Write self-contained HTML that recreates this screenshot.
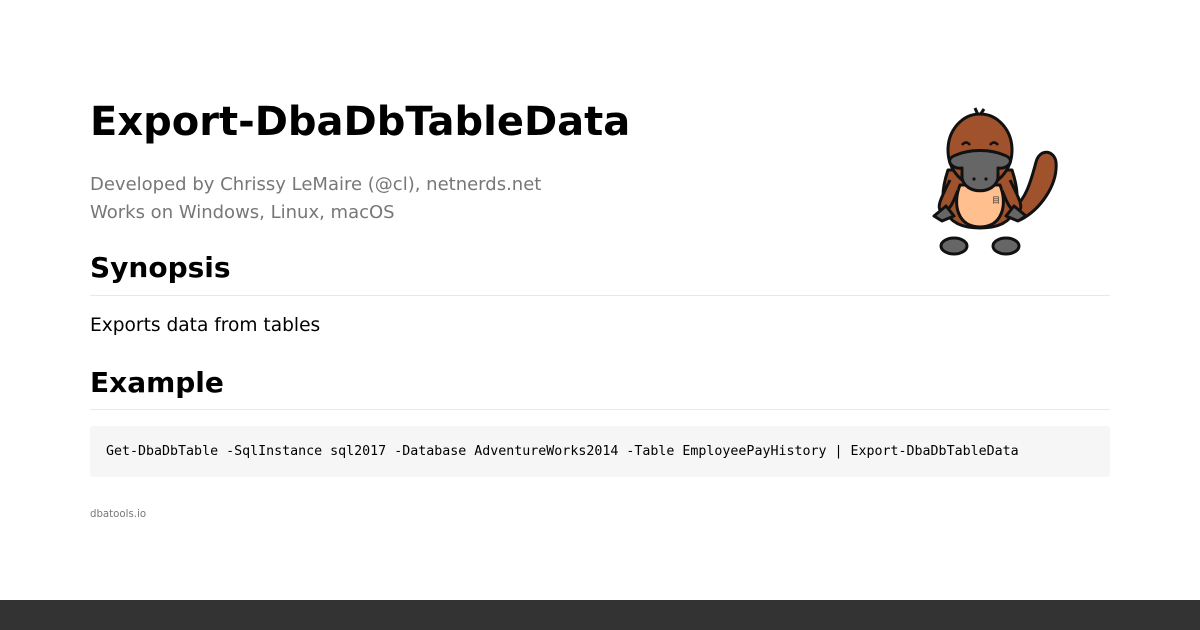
<!DOCTYPE html>
<html><head><meta charset="utf-8"><style>
body{margin:0;width:1200px;height:630px;background:#fff;position:relative;font-family:"DejaVu Sans",sans-serif;overflow:hidden}
.wrap{position:absolute;left:90px;top:0;width:1020px}
h1{position:absolute;top:99px;margin:0;font-size:40px;font-weight:bold;color:#000;white-space:nowrap}
.sub{position:absolute;top:171px;font-size:18px;line-height:28px;color:#777}
h2{position:absolute;margin:0;font-size:28px;font-weight:bold;white-space:nowrap}
.hr{position:absolute;left:0;width:1020px;height:1px;background:#e8e8e8}
.p{position:absolute;top:315px;font-size:18.6px}
.code{position:absolute;top:426px;left:0;width:1020px;height:51px;background:#f6f6f6;border-radius:3px;font-family:"DejaVu Sans Mono",monospace;font-size:13.3px;line-height:51px;box-sizing:border-box;padding-left:16px;white-space:nowrap}
.foot{position:absolute;top:509px;font-size:10.2px;color:#777}
.bar{position:absolute;left:0;top:600px;width:1200px;height:30px;background:#333}
</style></head><body>
<div class="wrap">
<h1>Export-DbaDbTableData</h1>
<div class="sub">Developed by Chrissy LeMaire (@cl), netnerds.net<br>Works on Windows, Linux, macOS</div>
<h2 style="top:251px">Synopsis</h2>
<div class="hr" style="top:295px"></div>
<div class="p">Exports data from tables</div>
<h2 style="top:366px">Example</h2>
<div class="hr" style="top:409px"></div>
<div class="code">Get-DbaDbTable -SqlInstance sql2017 -Database AdventureWorks2014 -Table EmployeePayHistory | Export-DbaDbTableData</div>
<div class="foot">dbatools.io</div>
</div>
<svg style="position:absolute;left:920px;top:100px" width="150" height="165" viewBox="0 0 150 165">
<g stroke="#111" stroke-width="3" stroke-linejoin="round">
<path d="M100 120 C120 110 138 85 136 62 C134 50 120 48 116 62 C110 85 105 100 92 110 Z" fill="#a0522d"/>
<ellipse cx="34" cy="146" rx="13" ry="8" fill="#666"/>
<ellipse cx="86" cy="146" rx="13" ry="8" fill="#666"/>
<path d="M28 70 C18 100 20 128 60 128 C100 128 102 100 92 70 Z" fill="#a0522d"/>
<path d="M40 85 C32 105 38 127 60 127 C82 127 88 105 80 85 Z" fill="#ffbf8f"/>
<ellipse cx="60" cy="50" rx="32" ry="36" fill="#a0522d"/>
<path d="M58 15 L55 8 M60 15 L64 9" fill="none"/>
<path d="M36 55 C22 60 34 70 42 68 L42 78 C45 95 75 95 78 78 L78 68 C86 70 98 60 84 55 C70 49 50 49 36 55 Z" fill="#666"/>
<path d="M30 80 C20 100 16 108 22 112 C30 112 34 100 38 90" fill="#a0522d"/>
<path d="M90 80 C100 100 104 108 98 112 C90 112 86 100 82 90" fill="#a0522d"/>
<path d="M14 116 L26 106 L34 116 L22 121 Z" fill="#666"/>
<path d="M106 116 L94 106 L86 116 L98 121 Z" fill="#666"/>
</g>
<path d="M42 45 q4 -5 8 0 M70 45 q4 -5 8 0" stroke="#111" stroke-width="2.5" fill="none"/>
<circle cx="54" cy="79" r="1.6" fill="#111"/><circle cx="66" cy="79" r="1.6" fill="#111"/>
<text x="72" y="103" font-size="8" font-family="DejaVu Sans" fill="#333">目</text>
</svg>
<div class="bar"></div>
</body></html>
